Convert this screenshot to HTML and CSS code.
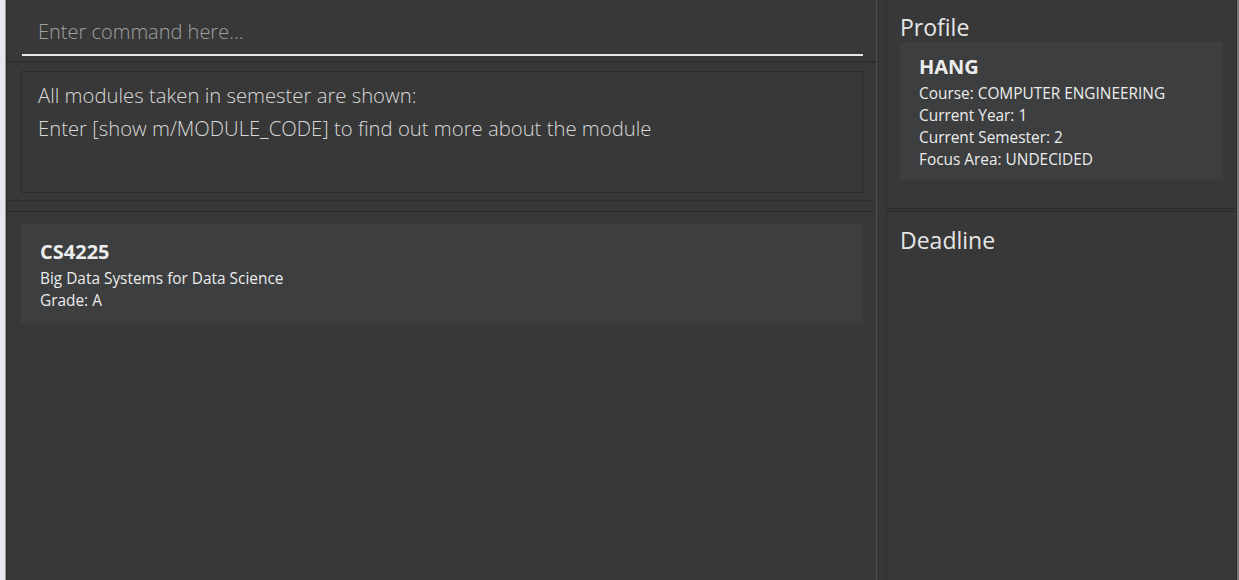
FILE: index.html
```html
<!DOCTYPE html>
<html>
<head>
<meta charset="utf-8">
<link rel="stylesheet" href="styles.css">
</head>
<body>
<div class="desk-left"></div>
<div class="app">
  <div class="col-left">
    <div class="command-box">
      <div class="command-input">Enter command here...</div>
    </div>
    <div class="result-panel">
      <div class="result-display">
        <div class="result-line">All modules taken in semester are shown:</div>
        <div class="result-line">Enter [show m/MODULE_CODE] to find out more about the module</div>
      </div>
    </div>
    <div class="hsplit"></div>
    <div class="module-panel">
      <div class="card module-card">
        <div class="card-title">CS4225</div>
        <div class="card-line">Big Data Systems for Data Science</div>
        <div class="card-line">Grade: A</div>
      </div>
    </div>
  </div>
  <div class="vsplit"></div>
  <div class="col-right">
    <div class="profile-panel">
      <div class="panel-title">Profile</div>
      <div class="card profile-card">
        <div class="card-title">HANG</div>
        <div class="card-line">Course: COMPUTER ENGINEERING</div>
        <div class="card-line">Current Year: 1</div>
        <div class="card-line">Current Semester: 2</div>
        <div class="card-line">Focus Area: UNDECIDED</div>
      </div>
    </div>
    <div class="hsplit-thin"></div>
    <div class="deadline-panel">
      <div class="panel-title">Deadline</div>
    </div>
  </div>
</div>
<div class="desk-right"></div>
</body>
</html>
```

FILE: styles.css
```css
html, body {
  margin: 0;
  padding: 0;
  height: 100%;
  overflow: hidden;
}
body {
  display: flex;
  width: 1239px;
  height: 580px;
  background: #dfe3ea;
  font-family: "Open Sans", "Noto Sans", sans-serif;
}
.desk-left {
  width: 5px;
  background: #e6e8ee;
  border-right: 1px solid #9a9a9a;
}
.desk-right {
  width: 2px;
  background: #7a7a7a;
}
.app {
  flex: 1;
  display: flex;
  background: #383838;
  border-left: 1px solid #2a2a2a;
}
.col-left {
  width: 869px;
  display: flex;
  flex-direction: column;
}
.vsplit {
  width: 9px;
  border-left: 1px solid #4e4e4e;
  background: #373737;
}
.col-right {
  flex: 1;
  display: flex;
  flex-direction: column;
  border-left: 1px solid #2c2c2c;
  border-right: 1px solid #2c2c2c;
}
.command-box {
  box-sizing: border-box;
  height: 63px;
  padding: 0 13px 0 15px;
  border-bottom: 2px solid #2e2e2e;
  display: flex;
  flex-direction: column;
}
.command-input {
  height: 56px;
  box-sizing: border-box;
  padding: 19px 0 0 16px;
  border-bottom: 2px solid #e8e8e8;
  color: #a0a0a0;
  font-size: 20px;
  font-weight: 300;
  line-height: 26px;
}
.result-panel {
  height: 138px;
  box-sizing: border-box;
  padding: 8px 13px 0 14px;
  border-bottom: 1px solid #2e2e2e;
}
.result-display {
  height: 122px;
  box-sizing: border-box;
  border: 1px solid #2c2c2c;
  padding: 7px 0 0 16px;
  color: #d8d8d8;
  font-size: 20.3px;
  font-weight: 300;
  line-height: 33px;
}
.hsplit {
  height: 10px;
  border-bottom: 1px solid #2c2c2c;
  background: #373737;
}
.hsplit-thin {
  height: 2px;
  border-bottom: 1px solid #2c2c2c;
  background: #373737;
}
.module-panel {
  flex: 1;
  padding: 12px 13px 0 14px;
}
.card {
  background: #3c3e3f;
  color: #ececec;
}
.module-card {
  height: 99px;
  box-sizing: border-box;
  padding: 15px 0 0 19px;
}
.profile-card {
  height: 138px;
  box-sizing: border-box;
  padding: 12px 0 0 19px;
}
.card-title {
  font-size: 20px;
  font-weight: 700;
  line-height: 26px;
  margin-bottom: 3px;
}
.card-line {
  font-size: 15.4px;
  line-height: 22px;
}
.profile-panel {
  height: 209px;
  box-sizing: border-box;
  padding: 12px 13px 0 13px;
  border-bottom: 1px solid #2c2c2c;
}
.panel-title {
  color: #e6e6e6;
  font-size: 23px;
  line-height: 30px;
}
.deadline-panel {
  flex: 1;
  padding: 13px 13px 0 13px;
}
```
